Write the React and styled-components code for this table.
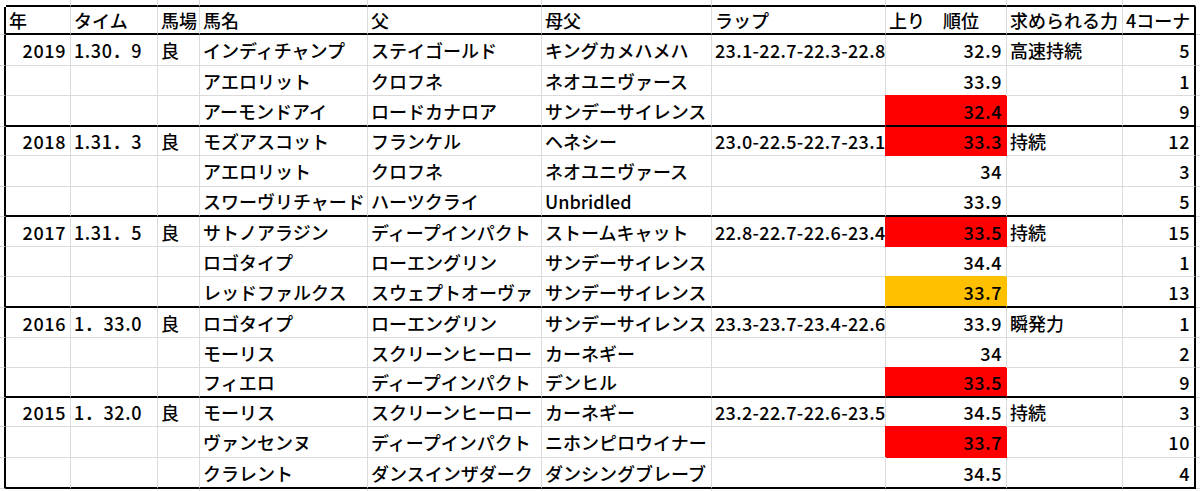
import React from "react";
import styled, { createGlobalStyle, css } from "styled-components";

const GlobalStyle = createGlobalStyle`
  html, body {
    margin: 0;
    padding: 0;
    background: #ffffff;
  }
  body {
    font-family: "Noto Sans CJK JP", "Noto Sans", sans-serif;
    color: #000000;
  }
`;

const GRID = "#dadada";
const INK = "#000000";
const FILLS = { red: "#ff0000", orange: "#ffc000" };

const Sheet = styled.div`
  display: flex;
  flex-direction: column;
  width: 1200px;
  height: 491px;
  overflow: hidden;
`;

const SheetRow = styled.div`
  display: grid;
  grid-template-columns: 6px 65px 87px 42px 168px 174px 170px 174px 121px 116px 73px 1fr;
  height: ${(p) => p.$h}px;
  flex: ${(p) => (p.$grow ? "1 1 auto" : "0 0 auto")};
`;

const Edge = styled.div`
  box-sizing: border-box;
  border-right: ${(p) => (p.$frame ? `2px solid ${INK}` : "none")};
  border-bottom: ${(p) => (p.$line ? `1px solid ${GRID}` : "none")};
`;

const Cell = styled.div`
  box-sizing: border-box;
  display: flex;
  align-items: center;
  justify-content: ${(p) => (p.$align === "right" ? "flex-end" : "flex-start")};
  padding: 0 ${(p) => (p.$align === "right" ? "4px" : "0")} 0 3px;
  overflow: hidden;
  white-space: nowrap;
  font-size: 18px;
  line-height: 1;
  font-weight: 500;
  letter-spacing: ${(p) => p.$spacing || 0}px;
  border-right: ${(p) => (p.$lastCol ? `2px solid ${INK}` : `1px solid ${GRID}`)};
  border-bottom: ${(p) =>
    p.$bottom === "thick" ? `2px solid ${INK}` : p.$bottom === "none" ? "none" : `1px solid ${GRID}`};
  ${(p) =>
    p.$fill &&
    css`
      background: ${FILLS[p.$fill]};
      border-right-color: ${p.$lastCol ? INK : FILLS[p.$fill]};
      ${p.$bottom !== "thick" && `border-bottom-color: ${FILLS[p.$fill]};`}
      box-shadow: -1px ${p.$coverTop ? "-1px" : "0"} 0 0 ${FILLS[p.$fill]};
    `}
`;

const COLUMNS = [
  { key: "year", label: "年", align: "right", spacing: 0.6 },
  { key: "time", label: "タイム", spacing: 0.6 },
  { key: "baba", label: "馬場" },
  { key: "name", label: "馬名" },
  { key: "sire", label: "父" },
  { key: "bms", label: "母父" },
  { key: "lap", label: "ラップ", spacing: 0.35 },
  { key: "agari", label: "上り　順位", align: "right", spacing: 0.6 },
  { key: "power", label: "求められる力" },
  { key: "corner", label: "4コーナ", align: "right", spacing: 0.6 },
];

const ROWS = [
  { year: "2019", time: "1.30．9", baba: "良", name: "インディチャンプ", sire: "ステイゴールド", bms: "キングカメハメハ", lap: "23.1-22.7-22.3-22.8", agari: "32.9", power: "高速持続", corner: "5" },
  { name: "アエロリット", sire: "クロフネ", bms: "ネオユニヴァース", agari: "33.9", corner: "1" },
  { name: "アーモンドアイ", sire: "ロードカナロア", bms: "サンデーサイレンス", agari: "32.4", fill: "red", corner: "9" },
  { year: "2018", time: "1.31．3", baba: "良", name: "モズアスコット", sire: "フランケル", bms: "ヘネシー", lap: "23.0-22.5-22.7-23.1", agari: "33.3", fill: "red", power: "持続", corner: "12" },
  { name: "アエロリット", sire: "クロフネ", bms: "ネオユニヴァース", agari: "34", corner: "3" },
  { name: "スワーヴリチャード", sire: "ハーツクライ", bms: "Unbridled", agari: "33.9", corner: "5" },
  { year: "2017", time: "1.31．5", baba: "良", name: "サトノアラジン", sire: "ディープインパクト", bms: "ストームキャット", lap: "22.8-22.7-22.6-23.4", agari: "33.5", fill: "red", power: "持続", corner: "15" },
  { name: "ロゴタイプ", sire: "ローエングリン", bms: "サンデーサイレンス", agari: "34.4", corner: "1" },
  { name: "レッドファルクス", sire: "スウェプトオーヴァ", bms: "サンデーサイレンス", agari: "33.7", fill: "orange", corner: "13" },
  { year: "2016", time: "1．33.0", baba: "良", name: "ロゴタイプ", sire: "ローエングリン", bms: "サンデーサイレンス", lap: "23.3-23.7-23.4-22.6", agari: "33.9", power: "瞬発力", corner: "1" },
  { name: "モーリス", sire: "スクリーンヒーロー", bms: "カーネギー", agari: "34", corner: "2" },
  { name: "フィエロ", sire: "ディープインパクト", bms: "デンヒル", agari: "33.5", fill: "red", corner: "9" },
  { year: "2015", time: "1．32.0", baba: "良", name: "モーリス", sire: "スクリーンヒーロー", bms: "カーネギー", lap: "23.2-22.7-22.6-23.5", agari: "34.5", power: "持続", corner: "3" },
  { name: "ヴァンセンヌ", sire: "ディープインパクト", bms: "ニホンピロウイナー", agari: "33.7", fill: "red", corner: "10" },
  { name: "クラレント", sire: "ダンスインザダーク", bms: "ダンシングブレーブ", agari: "34.5", corner: "4" },
];

const HEIGHTS = [31, 30, 31, 29, 31, 30, 30, 30, 31, 30, 30, 30, 29, 31, 31];

export default function App() {
  return (
    <>
      <GlobalStyle />
      <Sheet>
        <SheetRow $h={7}>
          <Edge />
          {COLUMNS.map((c, i) => (
            <Cell key={c.key} $bottom="thick" style={i === COLUMNS.length - 1 ? { borderRightColor: "transparent" } : undefined} />
          ))}
          <Edge />
        </SheetRow>

        <SheetRow $h={28}>
          <Edge $frame $line />
          {COLUMNS.map((c, i) => (
            <Cell key={c.key} $bottom="thick" $lastCol={i === COLUMNS.length - 1}>
              {c.label}
            </Cell>
          ))}
          <Edge $line />
        </SheetRow>

        {ROWS.map((r, ri) => {
          const groupEnd = ri % 3 === 2;
          const groupStart = ri % 3 === 0;
          return (
            <SheetRow key={ri} $h={HEIGHTS[ri]}>
              <Edge $frame $line />
              {COLUMNS.map((c, ci) => {
                const isAgari = c.key === "agari";
                return (
                  <Cell
                    key={c.key}
                    $align={c.align}
                    $spacing={c.spacing}
                    $bottom={groupEnd ? "thick" : "thin"}
                    $lastCol={ci === COLUMNS.length - 1}
                    $fill={isAgari ? r.fill : undefined}
                    $coverTop={!groupStart}
                  >
                    {r[c.key] || ""}
                  </Cell>
                );
              })}
              <Edge $line />
            </SheetRow>
          );
        })}

        <SheetRow $h={2} $grow>
          <Edge />
          {COLUMNS.map((c, i) => (
            <Cell key={c.key} $bottom="none" style={i === COLUMNS.length - 1 ? { borderRightColor: "transparent" } : undefined} />
          ))}
          <Edge />
        </SheetRow>
      </Sheet>
    </>
  );
}
